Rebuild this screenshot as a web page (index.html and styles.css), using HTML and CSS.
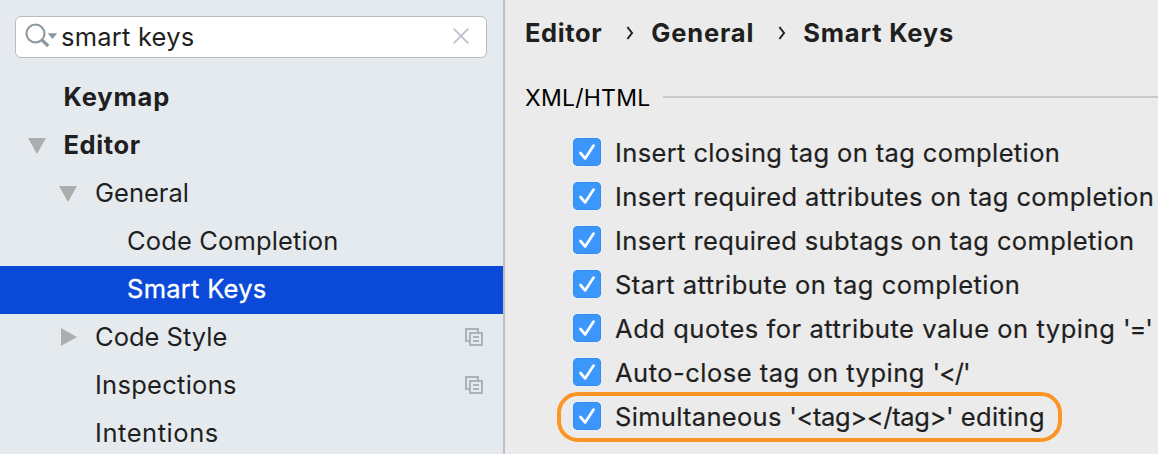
FILE: index.html
```html
<!DOCTYPE html>
<html lang="en">
<head>
<meta charset="utf-8">
<title>Smart Keys</title>
<link rel="stylesheet" href="styles.css">
</head>
<body>
<svg class="defs" width="0" height="0">
  <symbol id="check" viewBox="0 0 28 28"><path d="M7.5 15L12.1 20.4L20.6 7.6" fill="none" stroke="#fff" stroke-width="2.7" stroke-linecap="round" stroke-linejoin="round"/></symbol>
  <symbol id="copy" viewBox="0 0 18 18"><path d="M0 0H14V4H12V2H2V12H4V14H0ZM4 4H18V18H4ZM6 6V16H16V6ZM8 8H14V10H8ZM8 12H14V14H8Z" fill="#a9b4bb" fill-rule="evenodd"/></symbol>
  <symbol id="down" viewBox="0 0 18 16"><path d="M0 0H18L9 16Z" fill="#adadad"/></symbol>
  <symbol id="right" viewBox="0 0 16 18"><path d="M0 0L16 9L0 18Z" fill="#adadad"/></symbol>
  <symbol id="chevron" viewBox="0 0 8 14"><path d="M1.4 1L6 7L1.4 13" fill="none" stroke="#1f1f1f" stroke-width="2"/></symbol>
</svg>
<div class="window">
  <aside class="sidebar">
    <div class="search">
      <svg class="lens" width="34" height="26" viewBox="0 0 34 26"><circle cx="10.5" cy="10.5" r="9" fill="none" stroke="#8b979f" stroke-width="2.1"/><path d="M16.8 16.8L23.2 23" stroke="#8b979f" stroke-width="3.2"/><path d="M22.7 10.3H32.3L27.5 16Z" fill="#8b979f"/></svg>
      <span class="query">smart keys</span>
      <svg class="clear" width="16" height="16" viewBox="0 0 16 16"><path d="M1.2 1.2L14.8 14.8M14.8 1.2L1.2 14.8" stroke="#bdc4c9" stroke-width="1.9" stroke-linecap="round"/></svg>
    </div>
    <ul class="tree">
      <li class="node top"><span class="keymap">Keymap</span></li>
      <li class="node top"><svg class="arrow"><use href="#down"/></svg><span class="editor">Editor</span></li>
      <li class="node sub"><svg class="arrow"><use href="#down"/></svg><span class="general">General</span></li>
      <li class="node leaf"><span class="completion">Code Completion</span></li>
      <li class="node leaf selected"><span class="smart">Smart Keys</span></li>
      <li class="node sub"><svg class="arrow side"><use href="#right"/></svg><span class="style">Code Style</span><svg class="copy"><use href="#copy"/></svg></li>
      <li class="node sub"><span class="inspections">Inspections</span><svg class="copy"><use href="#copy"/></svg></li>
      <li class="node sub"><span class="intentions">Intentions</span></li>
    </ul>
  </aside>
  <main class="content">
    <nav class="crumbs"><span class="c1">Editor</span><svg class="chev"><use href="#chevron"/></svg><span class="c2">General</span><svg class="chev"><use href="#chevron"/></svg><span class="c3">Smart Keys</span></nav>
    <h2 class="section"><span class="section-title">XML/HTML</span></h2>
    <div class="options">
      <label class="option"><svg class="box"><use href="#check"/></svg><span class="o1">Insert closing tag on tag completion</span></label>
      <label class="option"><svg class="box"><use href="#check"/></svg><span class="o2">Insert required attributes on tag completion</span></label>
      <label class="option"><svg class="box"><use href="#check"/></svg><span class="o3">Insert required subtags on tag completion</span></label>
      <label class="option"><svg class="box"><use href="#check"/></svg><span class="o4">Start attribute on tag completion</span></label>
      <label class="option"><svg class="box"><use href="#check"/></svg><span class="o5">Add quotes for attribute value on typing <span class="tight">'='</span></span></label>
      <label class="option"><svg class="box"><use href="#check"/></svg><span class="o6">Auto-close tag on typing <span class="tight">'&lt;/'</span></span></label>
      <label class="option marked"><svg class="box"><use href="#check"/></svg><span class="o7">Simultaneous <span class="markup">'&lt;tag&gt;&lt;/tag&gt;'</span> editing</span></label>
    </div>
  </main>
</div>
</body>
</html>
```
FILE: styles.css
```css
*, *::before, *::after { box-sizing: border-box; }
body { margin: 0; overflow: hidden; font-family: Inter, "Liberation Sans", sans-serif; font-size: 25.5px; color: #1f1f1f; white-space: nowrap; font-feature-settings: "calt" 0; }
svg { display: block; flex: none; }
.defs { position: absolute; }
.window { display: flex; width: 1158px; height: 454px; overflow: hidden; background: #ebebeb; }
.sidebar { width: 505px; flex: none; background: #e5eaee; border-right: 2px solid #bfbfc0; padding-top: 16px; }
.search { display: flex; align-items: center; width: 472px; height: 42px; margin-left: 15px; padding: 0 17px 0 9px; background: #fff; border: 1px solid #b9bdbf; border-radius: 6px; }
.lens { margin-top: -2px; }
.query { margin: -2px 0 0 2px; letter-spacing: .22px; }
.clear { margin-left: auto; margin-top: -2px; }
.tree { list-style: none; margin: 16px 0 0; padding: 0; }
.node { display: flex; align-items: center; height: 48px; line-height: 46px; padding-bottom: 2px; }
.top { padding-left: 63.5px; font-weight: 700; }
.sub { padding-left: 95px; }
.leaf { padding-left: 127px; }
.keymap { letter-spacing: .85px; }
.editor { letter-spacing: .6px; }
.completion { letter-spacing: .14px; }
.smart { letter-spacing: .27px; }
.inspections { letter-spacing: .27px; }
.intentions { letter-spacing: .55px; }
.selected { background: #0b49d9; color: #fff; -webkit-text-stroke: .3px #fff; }
.arrow { width: 18px; height: 16px; margin: 1px 18px 0 -36px; }
.side { width: 16px; height: 18px; margin: 0 18px 0 -34px; }
.copy { width: 18px; height: 18px; margin: 0 20px 0 auto; }
.content { flex: 1; min-width: 0; padding: 8px 0 0 20px; }
.crumbs { display: flex; align-items: center; height: 48px; font-weight: 700; }
.chev { width: 8px; height: 14px; margin: 1px 17px 0 24px; }
.c1 { letter-spacing: .6px; }
.c2 { letter-spacing: .85px; }
.c3 { letter-spacing: .8px; }
.section { display: flex; align-items: center; height: 48px; margin: 17px 0 0; font-size: 23px; font-weight: 400; color: #000; }
.section-title { letter-spacing: .25px; padding-top: 2px; }
.section::after { content: ""; height: 2px; flex: 1; margin-left: 13px; background: #cacaca; }
.options { margin-top: 9px; padding-left: 48px; -webkit-text-stroke: .2px #1f1f1f; }
.option { display: flex; align-items: center; height: 44px; gap: 14px; position: relative; }
.o1 { letter-spacing: .375px; }
.o2 { letter-spacing: .41px; }
.o3 { letter-spacing: .39px; }
.o4 { letter-spacing: .5px; }
.o5 { letter-spacing: .54px; }
.o6 { letter-spacing: .49px; }
.o7 { letter-spacing: .3px; }
.tight { letter-spacing: -1.1px; }
.markup { letter-spacing: -.35px; }
.box { width: 28px; height: 28px; border-radius: 5px; background: #3b97fb; box-shadow: inset 0 0 0 1px #318ff3; }
.marked::after { content: ""; position: absolute; left: -16px; top: -2px; width: 505px; height: 50px; border: 4px solid #fd9426; border-radius: 21px; }
```
